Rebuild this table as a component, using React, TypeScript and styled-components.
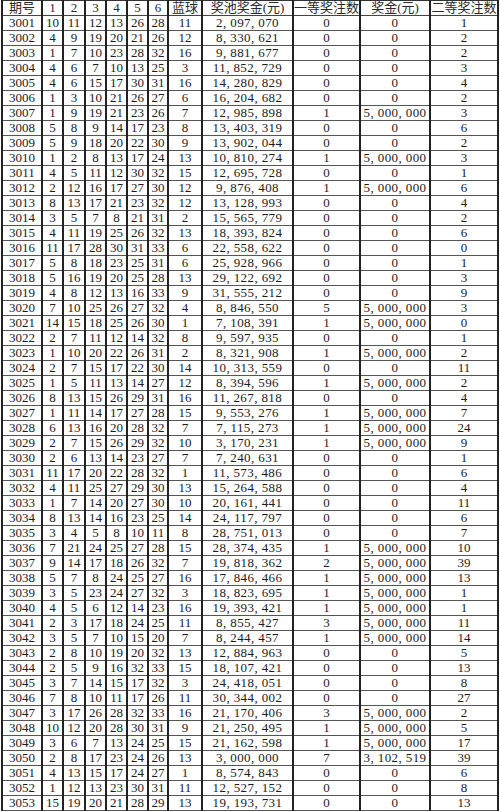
import React from "react";
import styled, { createGlobalStyle } from "styled-components";

const GlobalStyle = createGlobalStyle`
  html, body {
    margin: 0;
    padding: 0;
    background: #ffffff;
  }
`;

// issue, six red balls, blue ball, pool, first-prize count, first-prize amount, second-prize count
const RAW = `3001 10 11 12 13 26 28 11 2097070 0 0 1
3002 4 9 19 20 21 26 12 8330621 0 0 2
3003 1 7 10 23 28 32 16 9881677 0 0 2
3004 4 6 7 10 13 25 3 11852729 0 0 3
3005 4 6 15 17 30 31 16 14280829 0 0 4
3006 1 3 10 21 26 27 6 16204682 0 0 2
3007 1 9 19 21 23 26 7 12985898 1 5000000 3
3008 5 8 9 14 17 23 8 13403319 0 0 6
3009 5 9 18 20 22 30 9 13902044 0 0 2
3010 1 2 8 13 17 24 13 10810274 1 5000000 3
3011 4 5 11 12 30 32 15 12695728 0 0 1
3012 2 12 16 17 27 30 12 9876408 1 5000000 6
3013 8 13 17 21 23 32 12 13128993 0 0 4
3014 3 5 7 8 21 31 2 15565779 0 0 2
3015 4 11 19 25 26 32 13 18393824 0 0 6
3016 11 17 28 30 31 33 6 22558622 0 0 0
3017 5 8 18 23 25 31 6 25928966 0 0 1
3018 5 16 19 20 25 28 13 29122692 0 0 3
3019 4 8 12 13 16 33 9 31555212 0 0 9
3020 7 10 25 26 27 32 4 8846550 5 5000000 3
3021 14 15 18 25 26 30 1 7108391 1 5000000 0
3022 2 7 11 12 14 32 8 9597935 0 0 1
3023 1 10 20 22 26 31 2 8321908 1 5000000 2
3024 2 7 15 17 22 30 14 10313559 0 0 11
3025 1 5 11 13 14 27 12 8394596 1 5000000 2
3026 8 13 15 26 29 31 16 11267818 0 0 4
3027 1 11 14 17 27 28 15 9553276 1 5000000 7
3028 6 13 16 20 28 32 7 7115273 1 5000000 24
3029 2 7 15 26 29 32 10 3170231 1 5000000 9
3030 2 6 13 14 23 27 7 7240631 0 0 1
3031 11 17 20 22 28 32 1 11573486 0 0 6
3032 4 11 25 27 29 30 13 15264588 0 0 4
3033 1 7 14 20 27 30 10 20161441 0 0 11
3034 8 13 14 16 23 25 14 24117797 0 0 6
3035 3 4 5 8 10 11 8 28751013 0 0 7
3036 7 21 24 25 27 28 15 28374435 1 5000000 10
3037 9 14 17 18 26 32 7 19818362 2 5000000 39
3038 5 7 8 24 25 27 16 17846466 1 5000000 13
3039 3 5 23 24 27 32 3 18823695 1 5000000 1
3040 4 5 6 12 14 23 16 19393421 1 5000000 1
3041 2 3 17 18 24 25 11 8855427 3 5000000 11
3042 3 5 7 10 15 20 7 8244457 1 5000000 14
3043 2 8 10 19 20 32 13 12884963 0 0 5
3044 2 5 9 16 32 33 15 18107421 0 0 13
3045 3 7 14 15 17 32 3 24418051 0 0 8
3046 7 8 10 11 17 26 11 30344002 0 0 27
3047 3 17 26 28 32 33 16 21170406 3 5000000 2
3048 10 12 20 28 30 31 9 21250495 1 5000000 5
3049 3 6 7 13 24 25 15 21162598 1 5000000 17
3050 2 8 17 23 24 26 13 3000000 7 3102519 39
3051 4 13 15 17 24 27 1 8574843 0 0 6
3052 1 12 13 23 30 31 11 12527152 0 0 8
3053 15 19 20 21 28 29 13 19193731 0 0 13`;

const rows = RAW.split("\n").map((line) => line.trim().split(/\s+/));

const money = (v: string) =>
  v.length <= 3 ? v : v.replace(/\B(?=(\d{3})+(?!\d))/g, ", ");

const HEADERS = ["期号", "1", "2", "3", "4", "5", "6", "蓝球", "奖池奖金(元)", "一等奖注数", "奖金(元)", "二等奖注数"];
const WIDTHS = [40, 21, 22, 21, 21, 21, 20, 34, 91, 67, 70, 68];

const Sheet = styled.table`
  margin: 0 0 0 1px;
  width: 497px;
  table-layout: fixed;
  border-collapse: collapse;
  font-family: "Liberation Serif", "Noto Sans CJK SC", serif;
  font-size: 13px;
  color: #1c1c1c;
  background: #ffffff;
`;

const Row = styled.tr`
  height: 15px;
`;

const HeadCell = styled.th`
  padding: 0;
  height: 14px;
  line-height: 14px;
  font-weight: normal;
  text-align: center;
  white-space: nowrap;
  overflow: hidden;
  color: #2a2a2a;
  border-top: 1px solid #333;
  border-bottom: 1px solid #444;
  border-left: 2px solid #222;
  border-right: 2px solid #222;
`;

const Cell = styled.td<{ $wide?: boolean }>`
  padding: 0;
  height: 14px;
  line-height: 14px;
  text-align: center;
  white-space: nowrap;
  overflow: hidden;
  letter-spacing: ${(p) => (p.$wide ? "0.4px" : "0")};
  border-top: 1px solid #555;
  border-bottom: 1px solid #555;
  border-left: 2px solid #222;
  border-right: 2px solid #222;
`;

export default function App() {
  return (
    <>
      <GlobalStyle />
      <Sheet>
        <colgroup>
          {WIDTHS.map((w, i) => (
            <col key={i} style={{ width: w }} />
          ))}
        </colgroup>
        <thead>
          <Row>
            {HEADERS.map((h) => (
              <HeadCell key={h}>{h}</HeadCell>
            ))}
          </Row>
        </thead>
        <tbody>
          {rows.map((r) => (
            <Row key={r[0]}>
              {r.slice(0, 8).map((v, i) => (
                <Cell key={i}>{v}</Cell>
              ))}
              <Cell $wide>{money(r[8])}</Cell>
              <Cell>{r[9]}</Cell>
              <Cell $wide>{money(r[10])}</Cell>
              <Cell>{r[11]}</Cell>
            </Row>
          ))}
        </tbody>
      </Sheet>
    </>
  );
}
